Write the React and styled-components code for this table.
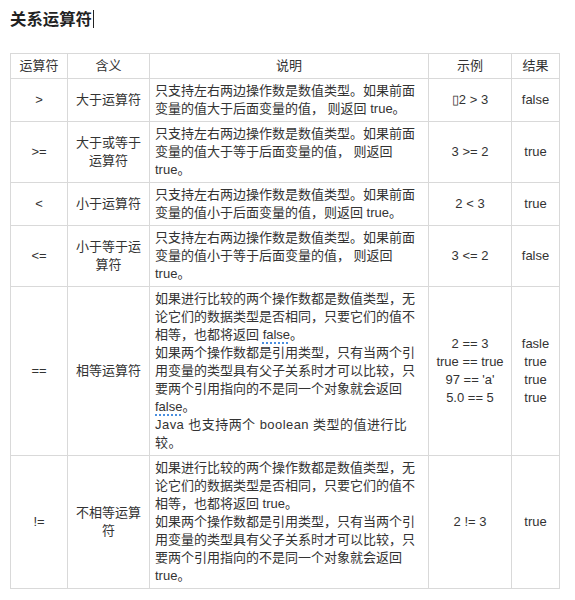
import React from "react"
import styled, { createGlobalStyle } from "styled-components"

const GlobalStyle = createGlobalStyle`
  body {
    margin: 0;
    background: #fff;
    font-family: "Liberation Sans", "Noto Sans CJK SC", sans-serif;
    color: #333;
  }
`

const Page = styled.div`
  padding: 9px 10px 10px 10px;
`

const Title = styled.h3`
  margin: 0 0 24px 0;
  font-size: 16.4px;
  line-height: 20px;
  font-weight: bold;
  color: #222;
  display: flex;
  align-items: center;
`

const Caret = styled.span`
  display: inline-block;
  width: 1px;
  height: 18px;
  margin-left: 1px;
  background: #222;
`

const Table = styled.table`
  border-collapse: collapse;
  table-layout: fixed;
  width: 549px;
  font-size: 13px;
  line-height: 18px;
`

const Th = styled.th`
  border: 1px solid #d9d9d9;
  padding: 3px 5px;
  font-weight: normal;
  text-align: center;
  color: #333;
`

const Td = styled.td`
  border: 1px solid #d9d9d9;
  padding: 3px 5px;
  vertical-align: middle;
  text-align: ${p => (p.$left ? "left" : "center")};
  color: #333;
`

const Para = styled.div`
  letter-spacing: ${p => (p.$wide ? "0.45px" : "normal")};
`

const Marked = styled.span`
  text-decoration: underline dotted #4a8fe0;
  text-decoration-thickness: 2px;
  text-underline-offset: 3px;
`

const Lines = ({ items }) => items.map((t, i) => <div key={i}>{t}</div>)

const rows = [
  {
    op: ">",
    name: "大于运算符",
    desc: "只支持左右两边操作数是数值类型。如果前面变量的值大于后面变量的值， 则返回 true。",
    ex: ["\u25AF2 > 3"],
    res: ["false"],
  },
  {
    op: ">=",
    name: "大于或等于运算符",
    desc: "只支持左右两边操作数是数值类型。如果前面变量的值大于等于后面变量的值， 则返回 true。",
    ex: ["3 >= 2"],
    res: ["true"],
  },
  {
    op: "<",
    name: "小于运算符",
    desc: "只支持左右两边操作数是数值类型。如果前面变量的值小于后面变量的值，则返回 true。",
    ex: ["2 < 3"],
    res: ["true"],
  },
  {
    op: "<=",
    name: "小于等于运算符",
    desc: "只支持左右两边操作数是数值类型。如果前面变量的值小于等于后面变量的值， 则返回 true。",
    ex: ["3 <= 2"],
    res: ["false"],
  },
  {
    op: "==",
    name: "相等运算符",
    desc: (
      <>
        <Para>
          如果进行比较的两个操作数都是数值类型，无论它们的数据类型是否相同，只要它们的值不相等，也都将返回 <Marked>false</Marked>。
        </Para>
        <Para>
          如果两个操作数都是引用类型，只有当两个引用变量的类型具有父子关系时才可以比较，只要两个引用指向的不是同一个对象就会返回 <Marked>false</Marked>。
        </Para>
        <Para $wide>Java 也支持两个 boolean 类型的值进行比较。</Para>
      </>
    ),
    ex: ["2 == 3", "true == true", "97 == 'a'", "5.0 == 5"],
    res: ["fasle", "true", "true", "true"],
  },
  {
    op: "!=",
    name: "不相等运算符",
    desc: (
      <>
        <Para>
          如果进行比较的两个操作数都是数值类型，无论它们的数据类型是否相同，只要它们的值不相等，也都将返回 true。
        </Para>
        <Para>
          如果两个操作数都是引用类型，只有当两个引用变量的类型具有父子关系时才可以比较，只要两个引用指向的不是同一个对象就会返回 true。
        </Para>
      </>
    ),
    ex: ["2 != 3"],
    res: ["true"],
  },
]

const App = () => {
  return (
    <>
      <GlobalStyle />
      <Page>
        <Title>
          关系运算符
          <Caret />
        </Title>
        <Table>
          <colgroup>
            <col style={{ width: 57 }} />
            <col style={{ width: 82 }} />
            <col style={{ width: 279 }} />
            <col style={{ width: 83 }} />
            <col style={{ width: 48 }} />
          </colgroup>
          <thead>
            <tr>
              <Th>运算符</Th>
              <Th>含义</Th>
              <Th>说明</Th>
              <Th>示例</Th>
              <Th>结果</Th>
            </tr>
          </thead>
          <tbody>
            {rows.map(row => (
              <tr key={row.op}>
                <Td>{row.op}</Td>
                <Td>{row.name}</Td>
                <Td $left>{row.desc}</Td>
                <Td>
                  <Lines items={row.ex} />
                </Td>
                <Td>
                  <Lines items={row.res} />
                </Td>
              </tr>
            ))}
          </tbody>
        </Table>
      </Page>
    </>
  )
}

export default App
